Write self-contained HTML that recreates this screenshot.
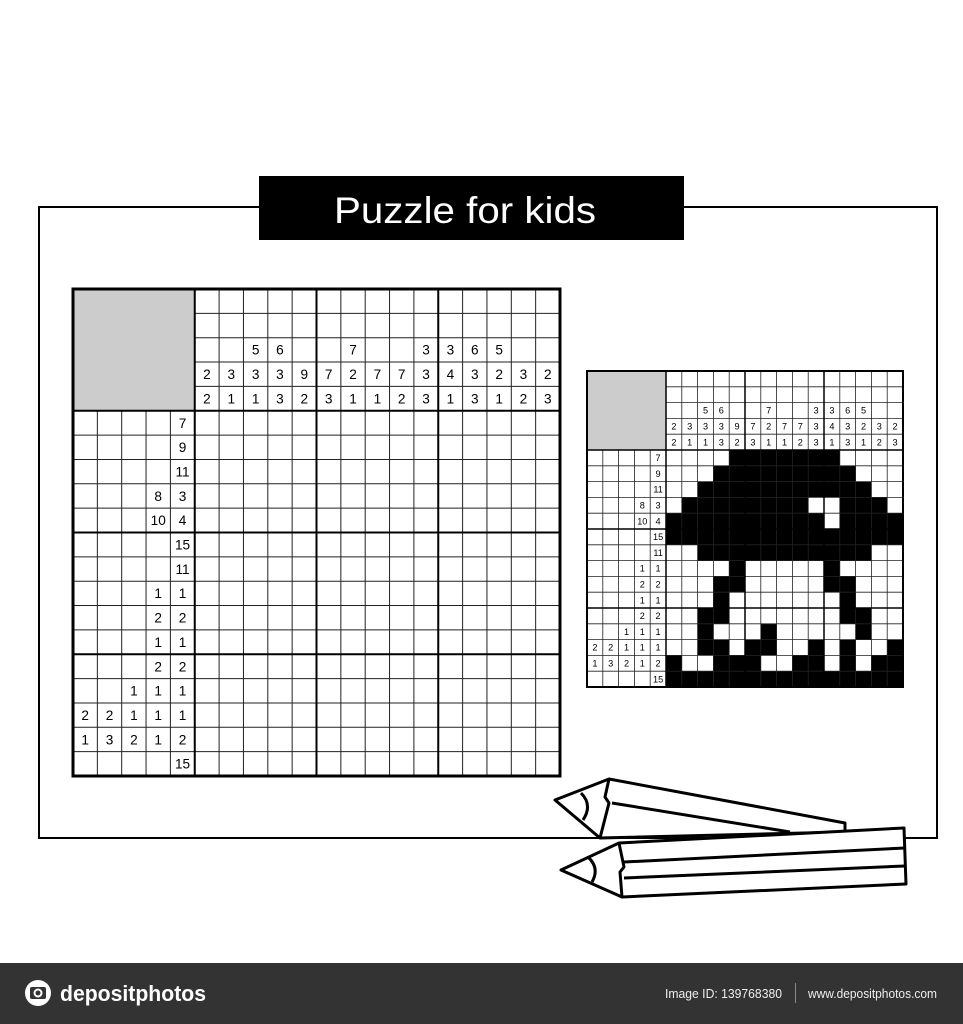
<!DOCTYPE html>
<html><head><meta charset="utf-8"><style>
html,body{margin:0;padding:0;background:#fff;}
body{width:963px;height:1024px;overflow:hidden;position:relative;font-family:"Liberation Sans",sans-serif;}
svg{position:absolute;left:0;top:0;}
</style></head><body>
<svg width="963" height="1024" viewBox="0 0 963 1024" xmlns="http://www.w3.org/2000/svg">
<rect x="39" y="207" width="898" height="631" fill="none" stroke="#000" stroke-width="2"/>
<rect x="259" y="176" width="425" height="64" fill="#000"/>
<text x="465" y="223" fill="#fff" font-size="37" text-anchor="middle" textLength="262" lengthAdjust="spacingAndGlyphs" font-family="Liberation Sans, sans-serif">Puzzle for kids</text>

<!-- BIG GRID -->
<g transform="translate(73,289) scale(24.35)">
<rect x="0" y="0" width="5" height="5" fill="#cccccc"/>
<path fill="none" stroke="#222" stroke-width="1" vector-effect="non-scaling-stroke" d="M5 1H20M5 2H20M5 3H20M5 4H20M0 6H20M0 7H20M0 8H20M0 9H20M0 11H20M0 12H20M0 13H20M0 14H20M0 16H20M0 17H20M0 18H20M0 19H20M1 5V20M2 5V20M3 5V20M4 5V20M6 0V20M7 0V20M8 0V20M9 0V20M11 0V20M12 0V20M13 0V20M14 0V20M16 0V20M17 0V20M18 0V20M19 0V20"/>
<path fill="none" stroke="#000" stroke-width="2" vector-effect="non-scaling-stroke" d="M0 5H20M0 10H20M0 15H20M5 0V20M10 0V20M15 0V20"/>
<rect x="0" y="0" width="20" height="20" fill="none" stroke="#000" stroke-width="3" vector-effect="non-scaling-stroke"/>
<g font-size="0.56" text-anchor="middle" fill="#000" font-family="Liberation Sans, sans-serif">
<text x="7.5" y="2.7">5</text><text x="8.5" y="2.7">6</text><text x="11.5" y="2.7">7</text><text x="14.5" y="2.7">3</text><text x="15.5" y="2.7">3</text><text x="16.5" y="2.7">6</text><text x="17.5" y="2.7">5</text>
<text x="5.5" y="3.7">2</text><text x="6.5" y="3.7">3</text><text x="7.5" y="3.7">3</text><text x="8.5" y="3.7">3</text><text x="9.5" y="3.7">9</text><text x="10.5" y="3.7">7</text><text x="11.5" y="3.7">2</text><text x="12.5" y="3.7">7</text><text x="13.5" y="3.7">7</text><text x="14.5" y="3.7">3</text><text x="15.5" y="3.7">4</text><text x="16.5" y="3.7">3</text><text x="17.5" y="3.7">2</text><text x="18.5" y="3.7">3</text><text x="19.5" y="3.7">2</text>
<text x="5.5" y="4.7">2</text><text x="6.5" y="4.7">1</text><text x="7.5" y="4.7">1</text><text x="8.5" y="4.7">3</text><text x="9.5" y="4.7">2</text><text x="10.5" y="4.7">3</text><text x="11.5" y="4.7">1</text><text x="12.5" y="4.7">1</text><text x="13.5" y="4.7">2</text><text x="14.5" y="4.7">3</text><text x="15.5" y="4.7">1</text><text x="16.5" y="4.7">3</text><text x="17.5" y="4.7">1</text><text x="18.5" y="4.7">2</text><text x="19.5" y="4.7">3</text>
<text x="4.5" y="5.7">7</text>
<text x="4.5" y="6.7">9</text>
<text x="4.5" y="7.7">11</text>
<text x="3.5" y="8.7">8</text><text x="4.5" y="8.7">3</text>
<text x="3.5" y="9.7">10</text><text x="4.5" y="9.7">4</text>
<text x="4.5" y="10.7">15</text>
<text x="4.5" y="11.7">11</text>
<text x="3.5" y="12.7">1</text><text x="4.5" y="12.7">1</text>
<text x="3.5" y="13.7">2</text><text x="4.5" y="13.7">2</text>
<text x="3.5" y="14.7">1</text><text x="4.5" y="14.7">1</text>
<text x="3.5" y="15.7">2</text><text x="4.5" y="15.7">2</text>
<text x="2.5" y="16.7">1</text><text x="3.5" y="16.7">1</text><text x="4.5" y="16.7">1</text>
<text x="0.5" y="17.7">2</text><text x="1.5" y="17.7">2</text><text x="2.5" y="17.7">1</text><text x="3.5" y="17.7">1</text><text x="4.5" y="17.7">1</text>
<text x="0.5" y="18.7">1</text><text x="1.5" y="18.7">3</text><text x="2.5" y="18.7">2</text><text x="3.5" y="18.7">1</text><text x="4.5" y="18.7">2</text>
<text x="4.5" y="19.7">15</text>
</g>
</g>

<!-- SMALL GRID -->
<g transform="translate(587,371) scale(15.8)">
<rect x="0" y="0" width="5" height="5" fill="#cccccc"/>
<path fill="#000" d="M9 5h7v1h-7zM8 6h9v1h-9zM7 7h11v1h-11zM6 8h8v1h-8zM16 8h3v1h-3zM5 9h10v1h-10zM16 9h4v1h-4zM5 10h15v1h-15zM7 11h11v1h-11zM9 12h1v1h-1zM15 12h1v1h-1zM8 13h2v1h-2zM15 13h2v1h-2zM8 14h1v1h-1zM16 14h1v1h-1zM7 15h2v1h-2zM16 15h2v1h-2zM7 16h1v1h-1zM11 16h1v1h-1zM17 16h1v1h-1zM7 17h2v1h-2zM10 17h2v1h-2zM14 17h1v1h-1zM16 17h1v1h-1zM19 17h1v1h-1zM5 18h1v1h-1zM8 18h3v1h-3zM13 18h2v1h-2zM16 18h1v1h-1zM18 18h2v1h-2zM5 19h15v1h-15z"/>
<path fill="none" stroke="#222" stroke-width="0.8" vector-effect="non-scaling-stroke" d="M5 1H20M5 2H20M5 3H20M5 4H20M0 6H20M0 7H20M0 8H20M0 9H20M0 11H20M0 12H20M0 13H20M0 14H20M0 16H20M0 17H20M0 18H20M0 19H20M1 5V20M2 5V20M3 5V20M4 5V20M6 0V20M7 0V20M8 0V20M9 0V20M11 0V20M12 0V20M13 0V20M14 0V20M16 0V20M17 0V20M18 0V20M19 0V20"/>
<path fill="none" stroke="#000" stroke-width="1.5" vector-effect="non-scaling-stroke" d="M0 5H20M0 10H20M0 15H20M5 0V20M10 0V20M15 0V20"/>
<rect x="0" y="0" width="20" height="20" fill="none" stroke="#000" stroke-width="2" vector-effect="non-scaling-stroke"/>
<g font-size="0.58" text-anchor="middle" fill="#000" font-family="Liberation Sans, sans-serif">
<text x="7.5" y="2.7">5</text><text x="8.5" y="2.7">6</text><text x="11.5" y="2.7">7</text><text x="14.5" y="2.7">3</text><text x="15.5" y="2.7">3</text><text x="16.5" y="2.7">6</text><text x="17.5" y="2.7">5</text>
<text x="5.5" y="3.7">2</text><text x="6.5" y="3.7">3</text><text x="7.5" y="3.7">3</text><text x="8.5" y="3.7">3</text><text x="9.5" y="3.7">9</text><text x="10.5" y="3.7">7</text><text x="11.5" y="3.7">2</text><text x="12.5" y="3.7">7</text><text x="13.5" y="3.7">7</text><text x="14.5" y="3.7">3</text><text x="15.5" y="3.7">4</text><text x="16.5" y="3.7">3</text><text x="17.5" y="3.7">2</text><text x="18.5" y="3.7">3</text><text x="19.5" y="3.7">2</text>
<text x="5.5" y="4.7">2</text><text x="6.5" y="4.7">1</text><text x="7.5" y="4.7">1</text><text x="8.5" y="4.7">3</text><text x="9.5" y="4.7">2</text><text x="10.5" y="4.7">3</text><text x="11.5" y="4.7">1</text><text x="12.5" y="4.7">1</text><text x="13.5" y="4.7">2</text><text x="14.5" y="4.7">3</text><text x="15.5" y="4.7">1</text><text x="16.5" y="4.7">3</text><text x="17.5" y="4.7">1</text><text x="18.5" y="4.7">2</text><text x="19.5" y="4.7">3</text>
<text x="4.5" y="5.7">7</text>
<text x="4.5" y="6.7">9</text>
<text x="4.5" y="7.7">11</text>
<text x="3.5" y="8.7">8</text><text x="4.5" y="8.7">3</text>
<text x="3.5" y="9.7">10</text><text x="4.5" y="9.7">4</text>
<text x="4.5" y="10.7">15</text>
<text x="4.5" y="11.7">11</text>
<text x="3.5" y="12.7">1</text><text x="4.5" y="12.7">1</text>
<text x="3.5" y="13.7">2</text><text x="4.5" y="13.7">2</text>
<text x="3.5" y="14.7">1</text><text x="4.5" y="14.7">1</text>
<text x="3.5" y="15.7">2</text><text x="4.5" y="15.7">2</text>
<text x="2.5" y="16.7">1</text><text x="3.5" y="16.7">1</text><text x="4.5" y="16.7">1</text>
<text x="0.5" y="17.7">2</text><text x="1.5" y="17.7">2</text><text x="2.5" y="17.7">1</text><text x="3.5" y="17.7">1</text><text x="4.5" y="17.7">1</text>
<text x="0.5" y="18.7">1</text><text x="1.5" y="18.7">3</text><text x="2.5" y="18.7">2</text><text x="3.5" y="18.7">1</text><text x="4.5" y="18.7">2</text>
<text x="4.5" y="19.7">15</text>
</g>
</g>

<!-- PENCILS -->
<g fill="#fff" stroke="#000" stroke-width="3" stroke-linejoin="round">
<path d="M555 800L609 779L845 823L845 832L600 838Z"/>
<path fill="none" d="M609 779L605 797L609 803L600 838M612 803L790 832M581 793Q593 805 583 820"/>
<path d="M561 870L619 843L904 828L906 884L622 897Z"/>
<path fill="none" d="M619 843L624 867L620 872L622 897M624 862L905 848M624 878L905 866M588 857Q600 868 592 882"/>
</g>

<!-- FOOTER -->
<rect x="0" y="963" width="963" height="61" fill="#333333"/>
<circle cx="38" cy="993" r="13" fill="#fff"/>
<rect x="30" y="987" width="16" height="12" rx="2" fill="#333"/>
<circle cx="38" cy="993" r="4.5" fill="#fff"/>
<circle cx="38" cy="993" r="2.5" fill="#333"/>
<text x="60" y="1001" fill="#fff" font-size="22" font-weight="bold" textLength="146" lengthAdjust="spacingAndGlyphs" font-family="Liberation Sans, sans-serif">depositphotos</text>
<text x="665" y="998" fill="#eee" font-size="12.5" textLength="117" lengthAdjust="spacingAndGlyphs" font-family="Liberation Sans, sans-serif">Image ID: 139768380</text>
<rect x="795" y="983" width="1" height="20" fill="#888"/>
<text x="808" y="998" fill="#eee" font-size="12.5" textLength="129" lengthAdjust="spacingAndGlyphs" font-family="Liberation Sans, sans-serif">www.depositphotos.com</text>
</svg>
</body></html>
